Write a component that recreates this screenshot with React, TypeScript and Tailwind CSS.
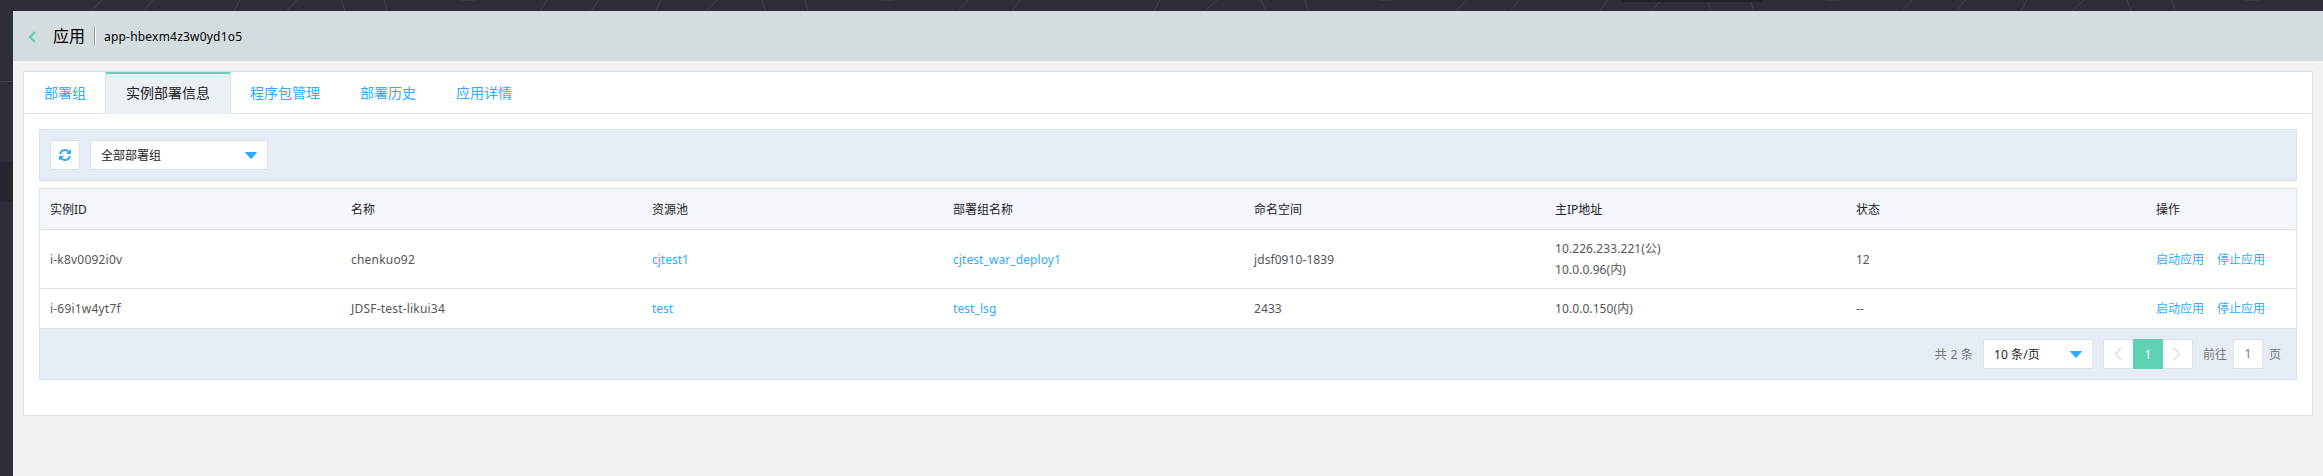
import React from "react";

const columns = ["实例ID", "名称", "资源池", "部署组名称", "命名空间", "主IP地址", "状态", "操作"];

const rows = [
  { id: "i-k8v0092i0v", name: "chenkuo92", pool: "cjtest1", group: "cjtest_war_deploy1", ns: "jdsf0910-1839", ips: ["10.226.233.221(公)", "10.0.0.96(内)"], status: "12" },
  { id: "i-69i1w4yt7f", name: "JDSF-test-likui34", pool: "test", group: "test_lsg", ns: "2433", ips: ["10.0.0.150(内)"], status: "--" },
];

// x at the lower edge of the top strip, x at the upper edge
const streaks: [number, number][] = [
  [91, 102], [144, 153], [234, 240], [286, 297], [345, 341], [387, 384], [540, 547], [591, 599],
  [656, 661], [706, 717], [765, 762], [808, 805], [958, 968], [1012, 1020], [1154, 1160],
  [1205, 1217], [1266, 1261], [1308, 1305], [1456, 1467], [1510, 1519], [1600, 1607],
  [1651, 1662], [1711, 1707], [1754, 1750], [1902, 1912], [1957, 1965], [2021, 2027],
  [2072, 2084], [2131, 2127], [2175, 2171],
];

const grid = "grid grid-cols-[301px_301px_301px_301px_301px_301px_300px_1fr]";
const link = "text-[#2eabff]";

function Caret() {
  return (
    <svg width="12" height="7" viewBox="0 0 12 7" className="shrink-0">
      <path d="M0 0.5Q0 0 0.8 0H11.2Q12 0 12 0.5L6.6 6.6Q6 7 5.4 6.6Z" fill="#2eabff" />
    </svg>
  );
}

function Backdrop() {
  return (
    <svg width="2323" height="476" className="absolute left-0 top-0" fill="none" stroke="#42434e">
      {streaks.map(([bottom, top]) => (
        <path key={bottom} d={`M${bottom} 11L${top} 0`} />
      ))}
      {[468, 887, 1386, 1833, 2252].map((x) => (
        <ellipse key={x} cx={x} cy="-1" rx="10" ry="2" fill="#3a3b47" stroke="none" />
      ))}
      <path d="M0 81.5H13" />
      <path d="M0 162H13V202H0Z" fill="#24272e" stroke="none" />
      <path d="M1621 0H1763V2H1621Z" fill="#202228" stroke="none" />
    </svg>
  );
}

export default function App() {
  return (
    <div className="relative h-[476px] w-[2323px] overflow-hidden bg-[#2d2e3a] pl-[13px] pt-[11px] font-['Noto_Sans','Noto_Sans_CJK_SC',sans-serif] text-[12px] text-[#555]">
      <Backdrop />
      <div className="relative h-[465px] bg-[#f2f2f5]">
        <header className="flex h-[50px] items-center bg-[#d5dcdf] text-black">
          <svg width="8" height="12" viewBox="0 0 8 12" className="ml-[15px] mt-[2px]" fill="none" stroke="#5fd1b4" strokeWidth="2.4">
            <path d="M7 1L2 6L7 11" />
          </svg>
          <h1 className="ml-[17px] text-[16px] leading-none">应用</h1>
          <div className="ml-[9px] h-[20px] w-[2px] border-l border-[#999] bg-white" />
          <span className="ml-[8px] mt-px tracking-[0.2px]">app-hbexm4z3w0yd1o5</span>
        </header>

        <main className="ml-[10px] mt-[10px] h-[345px] w-[2290px] border border-[#d9e1e9] bg-white">
          <nav className="flex h-[42px] border-b border-[#d9e1e9] text-[14px] leading-[41px] text-[#2eabff]">
            <a className="w-[82px] border-r border-[#d9e1e9] pl-[20px]">部署组</a>
            <a className="h-[42px] w-[124px] border-t-2 border-[#5fd1b4] bg-[#ebf0f4] pl-[20px] leading-[37px] text-[#222]">实例部署信息</a>
            <a className="w-[110px] border-l border-[#d9e1e9] pl-[19px]">程序包管理</a>
            <a className="w-[96px] pl-[20px]">部署历史</a>
            <a className="w-[96px] pl-[20px]">应用详情</a>
          </nav>

          <section className="mx-[15px] mt-[15px] flex h-[52px] items-center gap-[10px] border border-[#d9e1e9] bg-[#e5ecf4] pl-[10px]">
            <button className="flex size-[30px] items-center justify-center rounded-[2px] border border-[#d9e1e9] bg-white">
              <svg width="12" height="12" viewBox="0 0 1536 1536" fill="#2eabff">
                <path d="M1511 928q0 5-1 7-64 268-268 434.500t-478 166.500q-146 0-282.500-55t-243.500-157l-129 129q-19 19-45 19t-45-19-19-45v-448q0-26 19-45t45-19h448q26 0 45 19t19 45-19 45l-137 137q71 66 161 102t187 36q134 0 250-65t186-179q11-17 53-117 8-23 30-23h192q13 0 22.500 9.500t9.500 22.500zm25-800v448q0 26-19 45t-45 19h-448q-26 0-45-19t-19-45 19-45l138-138q-148-137-349-137-134 0-250 65t-186 179q-11 17-53 117-8 23-30 23h-199q-13 0-22.500-9.500t-9.500-22.500v-7q65-268 270-434.500t480-166.500q146 0 284 55.500t245 156.500l130-129q19-19 45-19t45 19 19 45z" />
              </svg>
            </button>
            <div className="flex h-[30px] w-[178px] items-center justify-between border border-[#d9e1e9] bg-white pl-[10px] pr-[10px] text-[#222]">
              <span className="pt-px">全部部署组</span>
              <Caret />
            </div>
          </section>

          <section className="mx-[15px] mt-[7px] border border-[#d9e1e9]">
            <div className={`${grid} h-[41px] items-center border-b border-[#d9e1e9] bg-[#f3f6fb] pt-[2px] text-[#222]`}>
              {columns.map((c) => (
                <div key={c} className="pl-[10px]">{c}</div>
              ))}
            </div>
            {rows.map((r) => (
              <div key={r.id} className={`${grid} min-h-[40px] items-center border-b border-[#d9e1e9] py-[8px] leading-[21px] [&>div]:pl-[10px]`}>
                <div className="tracking-[0.2px]">{r.id}</div>
                <div className="tracking-[0.2px]">{r.name}</div>
                <div className={link}>{r.pool}</div>
                <div className={`${link} tracking-[0.08px]`}>{r.group}</div>
                <div className="tracking-[0.08px]">{r.ns}</div>
                <div className="tracking-[0.08px]">
                  {r.ips.map((ip) => (
                    <p key={ip}>{ip}</p>
                  ))}
                </div>
                <div>{r.status}</div>
                <div className="flex gap-[13px] text-[#2eabff]">
                  <a>启动应用</a>
                  <a>停止应用</a>
                </div>
              </div>
            ))}
            <footer className="flex h-[50px] items-center justify-end bg-[#e5ecf4] pr-[15px] text-[#777]">
              <span className="pt-px tracking-[0.2px]">共 2 条</span>
              <div className="ml-[10px] flex h-[30px] w-[110px] items-center justify-between border border-[#d9e1e9] bg-white pl-[10px] pr-[10px] text-[#222]">
                <span className="pt-px tracking-[0.1px]">10 条/页</span>
                <Caret />
              </div>
              <div className="ml-[10px] flex h-[30px] w-[90px] border border-[#d9e1e9] bg-white">
                <span className="flex w-[29px] items-center justify-center">
                  <svg width="8" height="14" viewBox="0 0 8 14" fill="none" stroke="#dddde0" strokeWidth="1.4"><path d="M7 1L1.5 7L7 13" /></svg>
                </span>
                <span className="-my-px flex w-[30px] items-center justify-center bg-[#5fd1b4] pt-[2px] text-white">1</span>
                <span className="flex w-[29px] items-center justify-center">
                  <svg width="8" height="14" viewBox="0 0 8 14" fill="none" stroke="#dddde0" strokeWidth="1.4"><path d="M1 1L6.500 7L1 13" /></svg>
                </span>
              </div>
              <span className="ml-[10px] pt-px">前往</span>
              <span className="ml-[6px] flex size-[30px] items-center justify-center border border-[#d9e1e9] bg-white">1</span>
              <span className="ml-[6px] pt-px">页</span>
            </footer>
          </section>
        </main>
      </div>
    </div>
  );
}
